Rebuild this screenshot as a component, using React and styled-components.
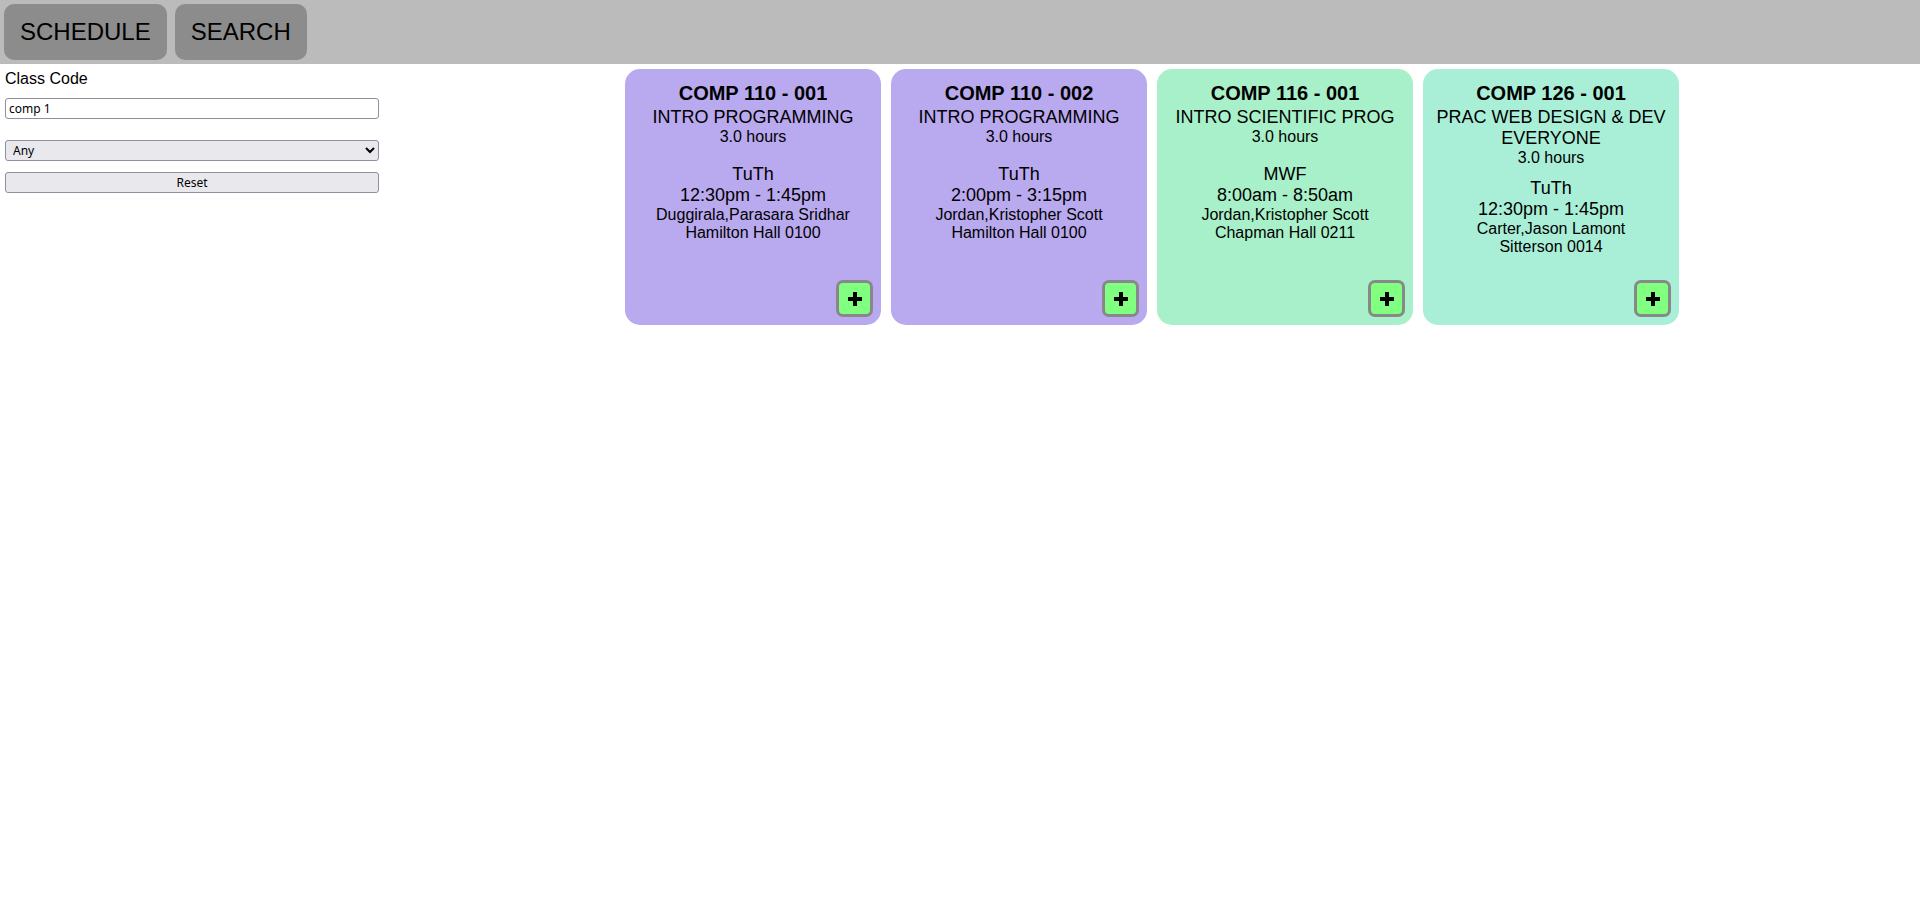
import React from "react";
import styled, { createGlobalStyle } from "styled-components";

const GlobalStyle = createGlobalStyle`
  body {
    margin: 0;
    font-family: "Liberation Sans", Arial, sans-serif;
    color: black;
    background: white;
  }
`;

const Header = styled.div`
  display: flex;
  gap: 8px;
  padding: 4px;
  height: 64px;
  box-sizing: border-box;
  background: #bbbbbb;
`;

const NavButton = styled.button`
  height: 56px;
  padding: 0 16px;
  border: none;
  border-radius: 10px;
  background: #8c8c8c;
  color: black;
  font-family: "Liberation Sans", Arial, sans-serif;
  font-size: 24px;
  cursor: pointer;
`;

const Main = styled.div`
  display: flex;
  align-items: flex-start;
`;

const Sidebar = styled.div`
  width: 20%;
  flex-shrink: 0;
  box-sizing: border-box;
  padding: 6px 5px 5px;
  display: flex;
  flex-direction: column;
`;

const Label = styled.label`
  font-size: 16px;
  margin-bottom: 10px;
`;

const control = `
  box-sizing: border-box;
  width: 100%;
  height: 21px;
  border: 1px solid #8f8f9d;
  border-radius: 3px;
  font-family: "Noto Sans", "DejaVu Sans", sans-serif;
  font-size: 12px;
  color: black;
`;

const TextInput = styled.input`
  ${control}
  background: white;
  padding: 0 3px;
  outline: none;
`;

const Select = styled.select`
  ${control}
  background: #e9e9ed;
  padding: 0 3px;
  margin-top: 21px;
`;

const ResetButton = styled.button`
  ${control}
  background: #e9e9ed;
  margin-top: 11px;
  padding: 0;
`;

const Results = styled.div`
  flex: 1;
  display: flex;
  flex-wrap: wrap;
  justify-content: center;
  gap: 10px;
  padding-top: 5px;
`;

const Card = styled.div`
  width: 256px;
  height: 256px;
  box-sizing: border-box;
  padding: 13px 8px 8px;
  border-radius: 15px;
  background: ${(p) => p.color};
  display: flex;
  flex-direction: column;
  text-align: center;
`;

const Info = styled.div`
  min-height: 71px;
  margin-bottom: 11px;
`;

const Code = styled.div`
  font-size: 20px;
  font-weight: bold;
  line-height: 23px;
  margin-bottom: 2px;
`;

const Big = styled.div`
  font-size: 18px;
`;

const Small = styled.div`
  font-size: 16px;
`;

const AddButton = styled.button`
  margin-top: auto;
  align-self: flex-end;
  width: 37px;
  height: 37px;
  box-sizing: border-box;
  border: 3px solid #888888;
  border-radius: 7px;
  background: #80ff80;
  padding: 0;
  display: flex;
  align-items: center;
  justify-content: center;
  cursor: pointer;
`;

const courses = [
  {
    code: "COMP 110 - 001",
    name: "INTRO PROGRAMMING",
    days: "TuTh",
    time: "12:30pm - 1:45pm",
    prof: "Duggirala,Parasara Sridhar",
    room: "Hamilton Hall 0100",
    color: "#b9a9ef",
  },
  {
    code: "COMP 110 - 002",
    name: "INTRO PROGRAMMING",
    days: "TuTh",
    time: "2:00pm - 3:15pm",
    prof: "Jordan,Kristopher Scott",
    room: "Hamilton Hall 0100",
    color: "#b9a9ef",
  },
  {
    code: "COMP 116 - 001",
    name: "INTRO SCIENTIFIC PROG",
    days: "MWF",
    time: "8:00am - 8:50am",
    prof: "Jordan,Kristopher Scott",
    room: "Chapman Hall 0211",
    color: "#a8f0c9",
  },
  {
    code: "COMP 126 - 001",
    name: "PRAC WEB DESIGN & DEV EVERYONE",
    days: "TuTh",
    time: "12:30pm - 1:45pm",
    prof: "Carter,Jason Lamont",
    room: "Sitterson 0014",
    color: "#a9efd8",
  },
];

function PlusIcon() {
  return (
    <svg width="14" height="14" viewBox="0 0 14 14">
      <path d="M5 0h4v5h5v4H9v5H5V9H0V5h5z" fill="black" />
    </svg>
  );
}

export default function App() {
  const [query, setQuery] = React.useState("comp 1");

  return (
    <>
      <GlobalStyle />
      <Header>
        <NavButton>SCHEDULE</NavButton>
        <NavButton>SEARCH</NavButton>
      </Header>
      <Main>
        <Sidebar>
          <Label>Class Code</Label>
          <TextInput value={query} onChange={(e) => setQuery(e.target.value)} />
          <Select defaultValue="any">
            <option value="any">Any</option>
          </Select>
          <ResetButton onClick={() => setQuery("")}>Reset</ResetButton>
        </Sidebar>
        <Results>
          {courses.map((c) => (
            <Card key={c.code} color={c.color}>
              <Info>
                <Code>{c.code}</Code>
                <Big>{c.name}</Big>
                <Small>3.0 hours</Small>
              </Info>
              <Big>{c.days}</Big>
              <Big>{c.time}</Big>
              <Small>{c.prof}</Small>
              <Small>{c.room}</Small>
              <AddButton>
                <PlusIcon />
              </AddButton>
            </Card>
          ))}
        </Results>
      </Main>
    </>
  );
}
